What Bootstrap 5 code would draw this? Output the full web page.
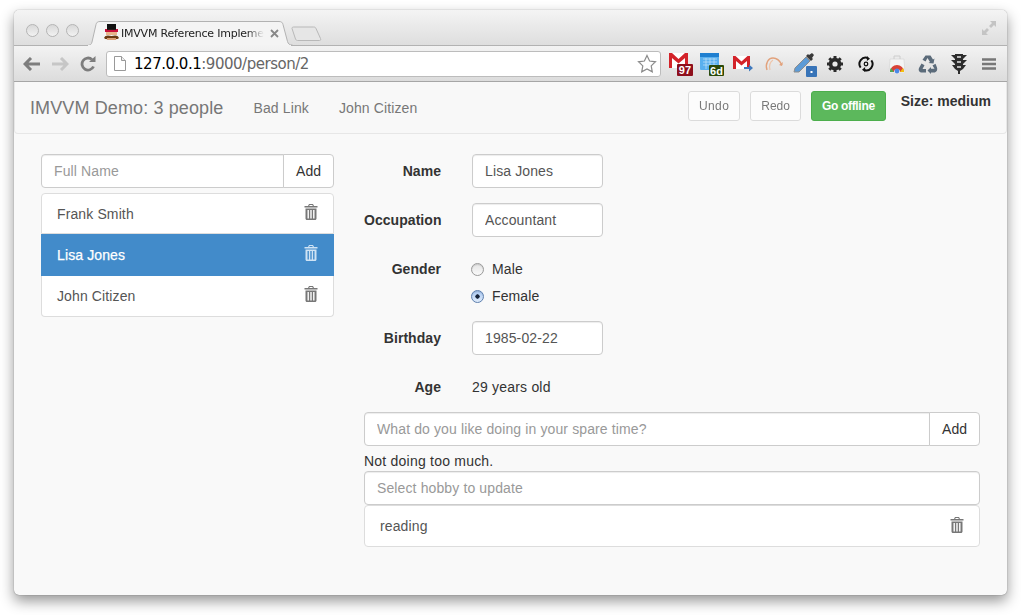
<!DOCTYPE html>
<html lang="en">
<head>
    <meta charset="UTF-8">
    <meta name="viewport" content="width=device-width, initial-scale=1.0">
    <title>IMVVM Demo</title>
    <link href="https://cdn.jsdelivr.net/npm/bootstrap@5.3.0/dist/css/bootstrap.min.css" rel="stylesheet">
    <style>
        html, body { height: 100%; }
        body {
            background: #fff;
            padding: 10px 14px 20px;
            font-family: "Liberation Sans", Arial, sans-serif;
            font-size: 14px;
            line-height: 20px;
            letter-spacing: .12px;
            color: #333;
            overflow: hidden;
        }
        .app-window {
            width: 993px;
            height: 585px;
            border-radius: 5px;
            overflow: hidden;
            background: #f9f9f9;
            box-shadow: 0 0 1px rgba(0,0,0,.55), 0 6px 14px rgba(0,0,0,.42);
        }
        .tab-strip {
            height: 36px;
            position: relative;
            background: linear-gradient(#f4f4f4, #dedede);
            border-bottom: 1px solid #b2b2b2;
        }
        .light {
            width: 13px;
            height: 13px;
            border-radius: 50%;
            border: 1px solid #b4b4b4;
            background: linear-gradient(#d8d8d8, #f2f2f2);
        }
        .lights { padding: 14px 0 0 12px; gap: 7px; }
        .tab-shape { position: absolute; left: 73px; top: 11px; }
        .tab-title {
            position: absolute;
            left: 107px;
            top: 16px;
            white-space: nowrap;
            font: 11px/15px "DejaVu Sans", sans-serif;
            letter-spacing: -.22px;
            color: #222;
            -webkit-mask-image: linear-gradient(90deg, #000 88%, transparent);
            mask-image: linear-gradient(90deg, #000 88%, transparent);
        }
        .tab-fav { position: absolute; left: 90px; top: 14px; }
        .tab-close { position: absolute; left: 256px; top: 19px; }
        .win-resize { position: absolute; right: 10px; top: 10px; }
        .tool-bar {
            height: 36px;
            background: linear-gradient(#f3f3f3, #dcdcdc);
            border-bottom: 1px solid #a6a6a6;
            padding: 0 0 0 9px;
        }
        .nav-ico { flex: 0 0 auto; margin-right: 10px; }
        .nav-ico:nth-child(2) { margin-right: 11px; }
        .nav-ico:nth-child(3) { margin-right: 0; }
        .omnibox {
            width: 555px;
            height: 26px;
            background: #fff;
            border: 1px solid #bcbcbc;
            border-radius: 3px;
            margin-left: 10px;
            padding: 0 3px 0 7px;
            font: 15px/24px "DejaVu Sans", sans-serif;
            letter-spacing: -.48px;
            color: #666;
        }
        .omnibox b { font-weight: 400; color: #000; }
        .page-ico { margin-right: 8px; }
        .ext-row { margin-left: 5px; }
        .ext-slot { width: 30.8px; height: 30px; display: flex; align-items: center; justify-content: center; flex: 0 0 auto; }
        .main-nav.navbar {
            height: 52px;
            padding: 0 15px;
            background: #f8f8f8;
            border: 1px solid #e7e7e7;
            border-top: 0;
            border-radius: 0 0 4px 4px;
        }
        .main-nav .navbar-brand {
            font-size: 18px;
            line-height: 20px;
            color: #777;
            padding: 0;
            margin: 0 30px 0 0;
        }
        .main-nav .nav-link { color: #777; padding: 0; margin-right: 30px; font-size: 14px; line-height: 20px; }
        .nav-actions { margin-top: -3px; gap: 10px; }
        .mini-btn { height: 30px; font-size: 12px; line-height: 18px; padding: 5px 10px; border-radius: 3px; letter-spacing: 0; }
        .mini-btn.btn-light { background: #fff; border: 1px solid #ccc; color: #333; opacity: .65; }
        .mini-btn.undo-btn { letter-spacing: .4px; }
        .mini-btn.btn-success { background: #5cb85c; border: 1px solid #4cae4c; font-weight: 700; letter-spacing: -.32px; }
        .size-note { font-weight: 700; color: #333; margin: -13px 0 0 15px; font-size: 14px; letter-spacing: 0; }
        .page-body { padding: 20px 27px 0; gap: 30px; }
        .left-side { width: 293px; flex: 0 0 293px; }
        .right-side { width: 616px; flex: 0 0 616px; }
        .form-control {
            height: 34px;
            padding: 6px 12px;
            font-size: 14px;
            line-height: 20px;
            letter-spacing: .12px;
            color: #555;
            border-color: #ccc;
            border-radius: 4px;
            box-shadow: inset 0 1px 1px rgba(0,0,0,.075);
        }
        .form-control::placeholder { color: #999; opacity: 1; }
        .add-btn {
            height: 34px;
            padding: 6px 12px;
            font-size: 14px;
            line-height: 20px;
            background: #fff;
            border: 1px solid #ccc;
            color: #333;
            border-radius: 4px;
            letter-spacing: 0;
        }
        .people-list { margin-top: 5px; border-radius: 4px; }
        .people-list .list-group-item {
            height: 41.33px;
            padding: 10px 15px;
            border-color: #ddd;
            color: #555;
            font-size: 14px;
            line-height: 20px;
        }
        .people-list .list-group-item.active {
            margin-top: 0;
            padding-top: 11px;
            border-top-width: 0;
            background: #428bca;
            border-color: #428bca;
            color: #fff;
            -webkit-text-stroke: .25px #fff;
        }
        .bin { flex: 0 0 auto; margin: -3px 0 0 0; color: #777; }
        .list-group-item.active .bin { color: #cfe3f4; }
        .field-row { display: flex; margin-bottom: 15px; }
        .field-label {
            width: 77px;
            flex: 0 0 77px;
            margin: 0 31px 0 0;
            padding-top: 7px;
            text-align: right;
            font-weight: 700;
            letter-spacing: .05px;
            color: #333;
        }
        .field-input { width: 131px; }
        .field-static { padding-top: 7px; height: 34px; color: #333; letter-spacing: .2px; }
        .radio-stack { padding-top: 7px; }
        .radio-line { display: flex; align-items: center; height: 20px; margin: 0 0 7px; padding: 0; min-height: 0; color: #333; }
        .radio-line:last-child { margin-bottom: 0; }
        .radio-line .form-check-input {
            float: none;
            width: 13px;
            height: 13px;
            margin: 1px 8px 0 -1px;
            border: 1px solid #9a9a9a;
            background: linear-gradient(#e4e4e4, #fafafa);
            box-shadow: inset 0 1px 1px rgba(0,0,0,.12);
        }
        .radio-line .form-check-input:checked {
            border-color: #5d7fae;
            background: radial-gradient(circle, #16233a 0 1.9px, transparent 2.4px), linear-gradient(#a9c8f2, #e0ecfb);
        }
        .hobby-add { margin-top: -7px; }
        .hobby-note { margin-top: 5px; color: #333; letter-spacing: .22px; }
        .hobby-list { border-radius: 4px; }
        .hobby-list .list-group-item {
            height: 42px;
            padding: 10px 15px;
            border-color: #ddd;
            color: #555;
            line-height: 20px;
        }
    </style>
</head>
<body>
    <div class="app-window d-flex flex-column">
        <div class="tab-strip">
            <div class="lights d-flex">
                <span class="light"></span><span class="light"></span><span class="light"></span>
            </div>
            <svg class="tab-shape" width="240" height="25" viewBox="0 0 240 25">
                <path d="M0 24.500c3 0 4.500-1 5-3.500L9 3.500C9.500 1.500 10.500.5 13 .5H192c2.500 0 3.500 1 4 3l4.500 17c.7 2.500 2 3.500 5 3.500" fill="#f4f4f4" stroke="#b2b2b2"/>
                <path d="M1 25h203v-1H1z" fill="#f3f3f3"/>
                <path d="M205 7.500c0-1 .6-1.500 1.500-1.500h20c1.500 0 2 .4 2.500 1.500l4.500 10c.5 1.500 0 2-1 2h-22c-1 0-1.500-.5-2-1.500z" fill="#e6e6e6" stroke="#b8b8b8"/>
            </svg>
            <svg class="tab-fav" width="15" height="17" viewBox="0 0 15 17">
                <rect x="3" y="0" width="9" height="5" fill="#111"/>
                <rect x="1" y="5" width="13" height="3" fill="#c8103a"/>
                <rect x="3" y="5" width="9" height="1" fill="#2a1a1a"/>
                <rect x="2" y="8" width="11" height="3" fill="#e8b48a"/>
                <path d="M0 14c1-3 4-3 7.500-2 3.500-1 6.500-1 7.500 2-2 2-5.500 1-7.500 0-2 1-5.500 2-7.500 0z" fill="#6b3a12"/>
                <rect x="3" y="14" width="9" height="2" fill="#d9a077"/>
            </svg>
            <div class="tab-title">IMVVM Reference Impleme</div>
            <svg class="tab-close" width="9" height="9" viewBox="0 0 9 9">
                <path d="M1 1l7 7m0-7l-7 7" stroke="#888" stroke-width="1.800"/>
            </svg>
            <svg class="win-resize" width="16" height="16" viewBox="0 0 16 16">
                <path d="M9 1h6v6l-2-2-3 3-2-2 3-3z" fill="#c4c4c4"/>
                <path d="M7 15H1V9l2 2 3-3 2 2-3 3z" fill="#c4c4c4"/>
            </svg>
        </div>
        <div class="tool-bar d-flex align-items-center">
            <svg class="nav-ico" width="18" height="14" viewBox="0 0 18 14"><path d="M8 1L2 7l6 6M2.500 7H17" fill="none" stroke="#7d7d7d" stroke-width="3"/></svg>
            <svg class="nav-ico" width="18" height="14" viewBox="0 0 18 14"><path d="M10 1l6 6-6 6M15.500 7H1" fill="none" stroke="#c6c6c6" stroke-width="3"/></svg>
            <svg class="nav-ico" width="16" height="16" viewBox="0 0 16 16"><path d="M13.500 10.500A6 6 0 1 1 12 3.500" fill="none" stroke="#7d7d7d" stroke-width="2.800"/><path d="M9 6h6.500V0z" fill="#7d7d7d"/></svg>
            <div class="omnibox d-flex align-items-center">
                <svg class="page-ico" width="12" height="15" viewBox="0 0 12 15"><path d="M.5.500h7l4 4v10H.5z" fill="#fff" stroke="#999"/><path d="M7.500.500v4h4" fill="#eee" stroke="#999"/></svg>
                <span><b>127.0.0.1</b>:9000/person/2</span>
                <svg class="ms-auto" width="20" height="19" viewBox="0 0 20 19"><path d="M10 1.500l2.600 5.500 5.900.8-4.300 4.100 1.100 6L10 15l-5.300 2.900 1.100-6L1.500 7.800 7.400 7z" fill="#fff" stroke="#8a8a8a" stroke-width="1.200"/></svg>
            </div>
            <div class="ext-row d-flex align-items-center">
                <span class="ext-slot">
                    <svg width="26" height="26" viewBox="0 0 26 26"><rect x="1" y="2" width="19" height="15" fill="#fff"/><path d="M1 2h3l6.500 6L17 2h3v15h-3V7l-6.500 5.500L4 7v10H1z" fill="#d3232a"/><rect x="9" y="13" width="16" height="12" rx="1" fill="#8e0f1c"/><text x="17" y="23" text-anchor="middle" font-family="Liberation Sans" font-weight="700" font-size="11" fill="#fff">97</text></svg>
                </span>
                <span class="ext-slot">
                    <svg width="26" height="26" viewBox="0 0 26 26"><rect x="1" y="2" width="19" height="17" rx="1" fill="#5ab0ee"/><rect x="1" y="2" width="19" height="4" fill="#1f7fd0"/><path d="M4 8h14M4 11h14M4 14h14M7 7v11M11 7v11M15 7v11" stroke="#b9def8" stroke-width=".8"/><rect x="10" y="14" width="15" height="11" rx="1" fill="#2b4a08"/><text x="17.500" y="23.500" text-anchor="middle" font-family="Liberation Sans" font-weight="700" font-size="11" fill="#fff">6d</text></svg>
                </span>
                <span class="ext-slot">
                    <svg width="22" height="22" viewBox="0 0 22 22"><rect x="1" y="3" width="17" height="13" fill="#fff"/><path d="M1 3h2.500l6 5.500L15.500 3H18v13h-3V8l-5.500 4.500L4 8v8H1z" fill="#d3232a"/><path d="M12 14h5v-2.500l4 3.500-4 3.500V16h-5z" fill="#3f79bd"/></svg>
                </span>
                <span class="ext-slot">
                    <svg width="20" height="18" viewBox="0 0 20 18"><path d="M3 15C1 9 4 3 9 3s7 3 9 7" fill="none" stroke="#e2a27c" stroke-width="1.400"/><path d="M6 15C5 11 6 7 9 5" fill="none" stroke="#eec5ab" stroke-width="1.200"/><path d="M15 10l3 1 1-4z" fill="#e2a27c"/></svg>
                </span>
                <span class="ext-slot">
                    <svg width="26" height="26" viewBox="0 0 26 26"><path d="M2 21l1-4L14 6l4 4L7 21z" fill="#5d9bd6" stroke="#8c8c8c"/><path d="M14 5l5 5 2-2-1-1 2-3-2-2-3 2-1-1z" fill="#3a3a3a"/><rect x="14" y="15" width="11" height="11" rx="1" fill="#3874b8"/><rect x="18.500" y="20" width="2" height="2" fill="#fff"/></svg>
                </span>
                <span class="ext-slot">
                    <svg width="18" height="18" viewBox="0 0 18 18"><circle cx="9" cy="9" r="4.500" fill="none" stroke="#2b2b2b" stroke-width="3.600"/><path d="M9 1v16M1 9h16M3.300 3.300l11.400 11.400M14.700 3.300L3.300 14.700" stroke="#2b2b2b" stroke-width="3"/><circle cx="9" cy="9" r="2.600" fill="#ebebeb"/></svg>
                </span>
                <span class="ext-slot">
                    <svg width="16" height="16" viewBox="0 0 18 18"><path d="M3 13A7 7 0 0 1 11 2.300M15 5a7 7 0 0 1-8 10.700" fill="none" stroke="#111" stroke-width="2.200"/><path d="M10 0l3.500 3L10 5.500zM8 12.500l-3.500 3L8 18z" fill="#111"/><circle cx="9" cy="9" r="2" fill="none" stroke="#111" stroke-width="1.400"/></svg>
                </span>
                <span class="ext-slot">
                    <svg width="18" height="20" viewBox="0 0 18 20"><path d="M2 5h14l1 14H1z" fill="#f4f4f4" stroke="#ddd"/><path d="M6 5V2h6v3" fill="none" stroke="#ccc"/><path d="M2 18a7 7 0 0 1 14 0h-4a3 3 0 0 0-6 0z" fill="#d94236"/><path d="M2 18c0-1.500.3-3 1-4l3 4z" fill="#4eab50"/><path d="M16 18c0-1.500-.3-3-1-4l-3 4z" fill="#f4c20d"/><circle cx="9" cy="17" r="2.400" fill="#4a88e8"/></svg>
                </span>
                <span class="ext-slot">
                    <svg width="20" height="20" viewBox="0 0 20 20"><g fill="#5b6b7a"><path d="M7.500 1.500h5l2.500 4 1.500-1-1 5-5-.5 1.500-1-2.500-4-2 3.500-3-1.800z"/><path d="M1 14l2.500-4.500 3 1.800L4.500 15H8v3.500H4c-2.500 0-4-2-3-4.500z"/><path d="M19 13.500c.8 2.500-.5 5-3 5h-3V20l-3.500-3.500L13 13v1.800h3.500l-2-3.300 3-1.800z"/></g></svg>
                </span>
                <span class="ext-slot">
                    <svg width="18" height="22" viewBox="0 0 18 22"><path d="M5 1h8v15l-3 2v3H8v-3l-3-2z" fill="#2d2d2d"/><path d="M1 2h16l-4 4H5zM1 7h16l-4 4H5zM2 12h14l-3 4H5z" fill="#2d2d2d"/><path d="M7 4h4M7 9h4M7 14h4" stroke="#e6e6e6" stroke-width="1.300"/></svg>
                </span>
                <span class="ext-slot">
                    <svg width="14" height="14" viewBox="0 0 14 14"><path d="M0 2.500h14M0 7h14M0 11.500h14" stroke="#777" stroke-width="2.600"/></svg>
                </span>
            </div>
        </div>
        <nav class="navbar main-nav d-flex align-items-center flex-nowrap justify-content-start">
            <a class="navbar-brand" href="#">IMVVM Demo: 3 people</a>
            <a class="nav-link" href="#">Bad Link</a>
            <a class="nav-link" href="#">John Citizen</a>
            <div class="nav-actions ms-auto d-flex align-items-center">
                <button class="btn btn-light mini-btn undo-btn">Undo</button>
                <button class="btn btn-light mini-btn">Redo</button>
                <button class="btn btn-success mini-btn">Go offline</button>
            </div>
            <span class="size-note">Size: medium</span>
        </nav>
        <div class="page-body d-flex">
            <div class="left-side">
                <div class="input-group">
                    <input class="form-control" placeholder="Full Name">
                    <button class="btn add-btn">Add</button>
                </div>
                <div class="list-group people-list">
                    <div class="list-group-item d-flex justify-content-between align-items-center">Frank Smith
                        <svg class="bin" width="14" height="16" viewBox="0 0 14 16"><use href="#trash"/></svg>
                    </div>
                    <div class="list-group-item active d-flex justify-content-between align-items-center">Lisa Jones
                        <svg class="bin" width="14" height="16" viewBox="0 0 14 16"><use href="#trash"/></svg>
                    </div>
                    <div class="list-group-item d-flex justify-content-between align-items-center">John Citizen
                        <svg class="bin" width="14" height="16" viewBox="0 0 14 16"><use href="#trash"/></svg>
                    </div>
                </div>
            </div>
            <div class="right-side">
                <div class="field-row">
                    <label class="field-label">Name</label>
                    <input class="form-control field-input" value="Lisa Jones">
                </div>
                <div class="field-row">
                    <label class="field-label">Occupation</label>
                    <input class="form-control field-input" value="Accountant">
                </div>
                <div class="field-row">
                    <label class="field-label">Gender</label>
                    <div class="radio-stack">
                        <label class="radio-line form-check"><input class="form-check-input" type="radio" name="gender">Male</label>
                        <label class="radio-line form-check"><input class="form-check-input" type="radio" name="gender" checked>Female</label>
                    </div>
                </div>
                <div class="field-row">
                    <label class="field-label">Birthday</label>
                    <input class="form-control field-input" value="1985-02-22">
                </div>
                <div class="field-row">
                    <label class="field-label">Age</label>
                    <div class="field-static">29 years old</div>
                </div>
                <div class="input-group hobby-add">
                    <input class="form-control" placeholder="What do you like doing in your spare time?">
                    <button class="btn add-btn">Add</button>
                </div>
                <div class="hobby-note">Not doing too much.</div>
                <input class="form-control" placeholder="Select hobby to update">
                <div class="list-group hobby-list">
                    <div class="list-group-item d-flex justify-content-between align-items-center">reading
                        <svg class="bin" width="14" height="16" viewBox="0 0 14 16"><use href="#trash"/></svg>
                    </div>
                </div>
            </div>
        </div>
    </div>
    <svg width="0" height="0" class="d-none">
        <symbol id="trash" viewBox="0 0 14 16">
            <path fill="currentColor" fill-rule="evenodd" d="M5 0h4l1 2h3.500v1.500H.5V2H4zM5.700 1L5.200 2h3.600l-.5-1zM1.500 4.500h11v10c0 .8-.6 1.500-1.500 1.500H3c-.9 0-1.500-.7-1.500-1.500zM3.500 6v8.500h1.400V6zM6.300 6v8.500h1.400V6zM9.100 6v8.500h1.400V6z"/>
        </symbol>
    </svg>

    <script src="https://cdn.jsdelivr.net/npm/bootstrap@5.3.0/dist/js/bootstrap.bundle.min.js"></script>
</body>
</html>
